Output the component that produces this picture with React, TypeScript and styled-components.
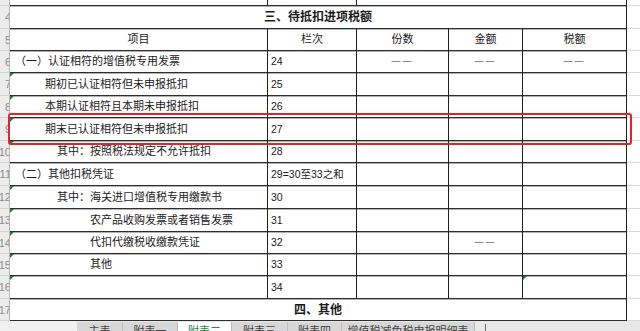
import React from 'react';
import styled, { createGlobalStyle, css } from 'styled-components';

const GlobalStyle = createGlobalStyle`
  html, body {
    margin: 0;
    padding: 0;
    width: 640px;
    height: 331px;
    overflow: hidden;
    background: #fff;
  }
  body {
    font-family: "Liberation Sans", "Noto Sans CJK SC", sans-serif;
    color: #1a1a1a;
  }
`;

// row header | 项目 | 栏次 | 份数 | 金额 | 税额 | next column
const COLS = '10px 258px 89px 92px 74px 104px 13px';

const Screen = styled.div`
  display: flex;
  flex-direction: column;
  width: 640px;
  height: 331px;
  overflow: hidden;
`;

const Viewport = styled.div`
  flex: 0 0 321px;
  overflow: hidden;
`;

// scrolled sheet: the first row is only partly on screen
const Sheet = styled.div`
  margin-top: -17px;
`;

const Row = styled.div<{ $h: number }>`
  display: grid;
  grid-template-columns: ${COLS};
  height: ${p => p.$h}px;
  position: relative;
`;

// the row numbers are scrolled partly out of view on the left
const RowHead = styled.div`
  box-sizing: border-box;
  background: #ececec;
  border-right: 1px solid #b5b5b5;
  border-bottom: 1px solid #d4d4d4;
  display: flex;
  justify-content: flex-end;
  align-items: center;
  overflow: hidden;
  white-space: nowrap;
  font-size: 11px;
  color: #8a8a8a;
`;

const RowNo = styled.span`
  margin-right: -2px;
`;

const Cell = styled.div<{
  $indent?: number;
  $center?: boolean;
  $flag?: boolean;
  $span?: string;
  $bold?: boolean;
}>`
  box-sizing: border-box;
  position: relative;
  display: flex;
  align-items: center;
  justify-content: ${p => (p.$center ? 'center' : 'flex-start')};
  padding-left: ${p => p.$indent ?? 0}px;
  border-right: 1px solid #1e1e1e;
  border-bottom: 1px solid #2e2e2e;
  box-shadow: 0 1px 0 rgba(0, 0, 0, 0.3);
  font-size: ${p => (p.$bold ? 12 : 11)}px;
  font-weight: ${p => (p.$bold ? 700 : 400)};
  line-height: 1;
  white-space: nowrap;
  overflow: hidden;
  ${p => p.$span && css`grid-column: ${p.$span};`}
  ${p =>
    p.$flag &&
    css`
      &::before {
        content: '';
        position: absolute;
        left: 0;
        top: 0;
        border-top: 4px solid #1f7a35;
        border-right: 4px solid transparent;
      }
    `}
`;

const NoText = styled.span`
  font-size: 10.5px;
`;

const Dash = styled.span`
  font-size: 9px;
  letter-spacing: 2px;
  color: #333;
`;

const Filler = styled.div`
  border-bottom: 1px solid #dadada;
`;

const Highlight = styled.div`
  position: absolute;
  left: 8px;
  right: 8px;
  top: -5px;
  bottom: -4px;
  border: 2px solid #e3232a;
  border-radius: 3px;
  z-index: 2;
  pointer-events: none;
`;

const TabBar = styled.div`
  flex: 0 0 auto;
  height: 22px;
  display: flex;
  background: #e8e8e8;
`;

const NavArea = styled.div`
  width: 77px;
  background: #f1f1f1;
`;

const Tab = styled.div<{ $active?: boolean; $w: number }>`
  box-sizing: border-box;
  width: ${p => p.$w}px;
  margin-top: 1px;
  padding-top: 4px;
  text-align: center;
  font-size: 11px;
  line-height: 1;
  white-space: nowrap;
  overflow: hidden;
  background: ${p => (p.$active ? '#ffffff' : '#d7d7d7')};
  color: ${p => (p.$active ? '#1e8b3c' : '#444')};
  border-right: 1px solid #bcbcbc;
`;

const Splitter = styled.div`
  width: 1px;
  height: 9px;
  margin: 3px 0 0 10px;
  background: #6a6a6a;
`;

type Line = {
  label: string;
  indent: number;
  no: string;
  h: number;
  flag?: boolean;
  qty?: boolean;
  amt?: boolean;
  tax?: boolean;
  taxFlag?: boolean;
  marked?: boolean;
};

const lines: Line[] = [
  { label: '（一）认证相符的增值税专用发票', indent: 5, no: '24', h: 22, qty: true, amt: true, tax: true },
  { label: '期初已认证相符但未申报抵扣', indent: 35, no: '25', h: 23, flag: true },
  { label: '本期认证相符且本期未申报抵扣', indent: 35, no: '26', h: 22, flag: true },
  { label: '期末已认证相符但未申报抵扣', indent: 35, no: '27', h: 23, flag: true, marked: true },
  { label: '其中：按照税法规定不允许抵扣', indent: 47, no: '28', h: 22, flag: true },
  { label: '（二）其他扣税凭证', indent: 5, no: '29=30至33之和', h: 23 },
  { label: '其中：海关进口增值税专用缴款书', indent: 47, no: '30', h: 23, flag: true },
  { label: '农产品收购发票或者销售发票', indent: 80, no: '31', h: 23, flag: true },
  { label: '代扣代缴税收缴款凭证', indent: 80, no: '32', h: 22, flag: true, amt: true },
  { label: '其他', indent: 80, no: '33', h: 22, flag: true },
  { label: '', indent: 80, no: '34', h: 23, flag: true, taxFlag: true },
];

const dash = <Dash>——</Dash>;

export default function App() {
  return (
    <Screen>
      <GlobalStyle />
      <Viewport>
        <Sheet>
          <Row $h={23}>
            <RowHead><RowNo>3</RowNo></RowHead>
            <Cell $indent={35}>其他应作进项税额转出的情形</Cell>
            <Cell $indent={3}><NoText>23</NoText></Cell>
            <Cell $span="4 / 7" />
            <Filler />
          </Row>
          <Row $h={23}>
            <RowHead><RowNo>4</RowNo></RowHead>
            <Cell $span="2 / 7" $center $bold>三、待抵扣进项税额</Cell>
            <Filler />
          </Row>
          <Row $h={22}>
            <RowHead><RowNo>5</RowNo></RowHead>
            <Cell $center>项目</Cell>
            <Cell $center>栏次</Cell>
            <Cell $center>份数</Cell>
            <Cell $center>金额</Cell>
            <Cell $center>税额</Cell>
            <Filler />
          </Row>
          {lines.map((l, i) => (
            <Row $h={l.h} key={l.no}>
              <RowHead><RowNo>{6 + i}</RowNo></RowHead>
              <Cell $indent={l.indent} $flag={l.flag}>{l.label}</Cell>
              <Cell $indent={3}><NoText>{l.no}</NoText></Cell>
              <Cell $center>{l.qty && dash}</Cell>
              <Cell $center>{l.amt && dash}</Cell>
              <Cell $center $flag={l.taxFlag}>{l.tax && dash}</Cell>
              <Filler />
              {l.marked && <Highlight />}
            </Row>
          ))}
          <Row $h={22}>
            <RowHead><RowNo>17</RowNo></RowHead>
            <Cell $span="2 / 7" $center $bold>四、其他</Cell>
            <Filler />
          </Row>
        </Sheet>
      </Viewport>
      <TabBar>
        <NavArea />
        <Tab $w={46}>主表</Tab>
        <Tab $w={55}>附表一</Tab>
        <Tab $w={54} $active>附表二</Tab>
        <Tab $w={56}>附表三</Tab>
        <Tab $w={54}>附表四</Tab>
        <Tab $w={133}>增值税减免税申报明细表</Tab>
        <Splitter />
      </TabBar>
    </Screen>
  );
}
